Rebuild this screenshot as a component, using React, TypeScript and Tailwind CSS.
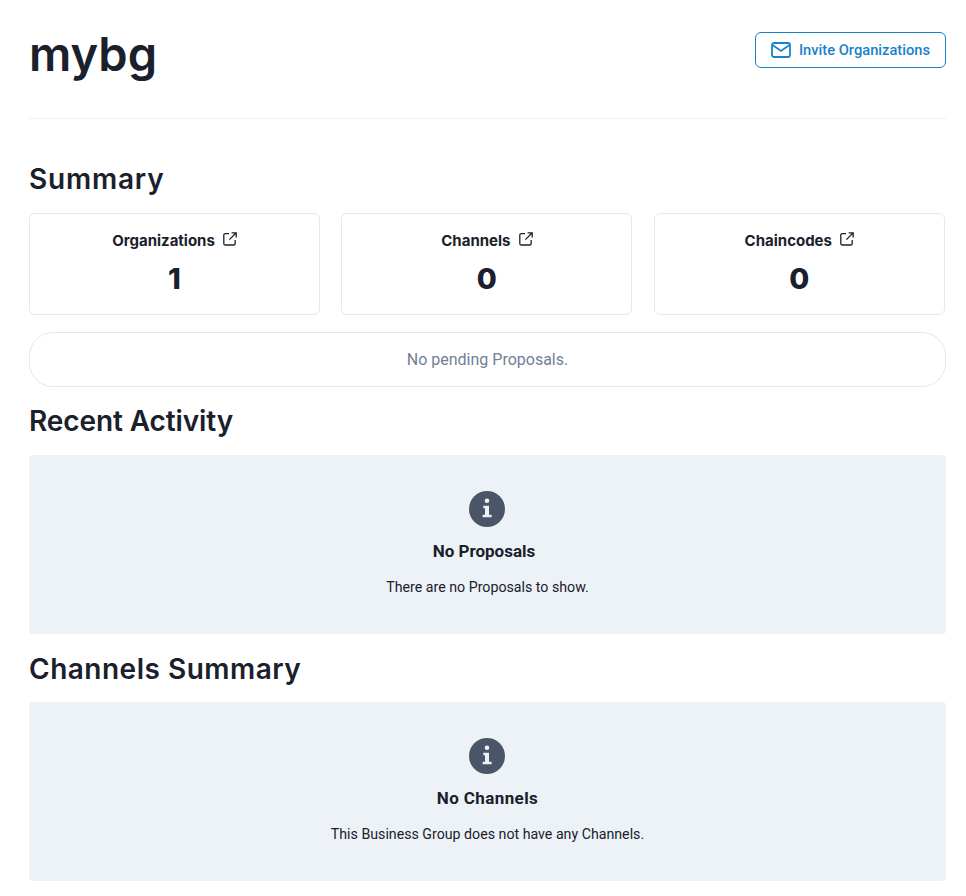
import type { ReactNode } from "react";

const heading = "font-['Inter',sans-serif]";

const summaryCards = [
  { label: "Organizations", value: 1 },
  { label: "Channels", value: 0 },
  { label: "Chaincodes", value: 0 },
];

const SectionTitle = ({ className, children }: { className: string; children: ReactNode }) => (
  <h2 className={`${heading} text-[28px] leading-9 font-semibold text-[#1a202c] ${className}`}>
    {children}
  </h2>
);

const LinkIcon = () => (
  <svg viewBox="0 0 14 14" className="mb-1 h-[14px] w-[14px] text-[#1a202c]" fill="none" stroke="currentColor" strokeWidth="1.3">
    <path d="M6 1.6H2.4A1.6 1.6 0 0 0 .8 3.2v8.2A1.6 1.6 0 0 0 2.4 13h8.2a1.6 1.6 0 0 0 1.6-1.6V8" />
    <path d="M8.6.8h4.6v4.6M13.2.8 6.4 7.6" />
  </svg>
);

const SummaryCard = ({ label, value }: { label: string; value: number }) => (
  <div className="flex h-[102px] flex-col items-center rounded-md border border-[#e2e8f0] pt-[17px]">
    <div className="flex h-5 items-center gap-2">
      <span className={`${heading} text-[15px] font-bold text-[#1a202c]`}>
        {label}
      </span>
      <LinkIcon />
    </div>
    <div className={`${heading} mt-[10px] text-[29px] leading-9 font-extrabold text-[#1a202c]`}>
      {value}
    </div>
  </div>
);

const InfoIcon = () => (
  <svg viewBox="0 0 36 36" className="mr-px h-9 w-9">
    <circle cx="18" cy="18" r="18" fill="#4a5568" />
    <circle cx="18" cy="9.7" r="2.3" fill="#edf2f7" />
    <path d="M14.3 14.7H20v9.1h2.6v2.5h-9v-2.5H16v-6.6h-1.7z" fill="#edf2f7" />
  </svg>
);

const EmptyPanel = ({ title, text, titleClass }: { title: string; text: string; titleClass?: string }) => (
  <div className="flex h-[179px] flex-col items-center rounded bg-[#edf2f7] pt-9">
    <InfoIcon />
    <div className={`mt-3 text-[17px] leading-6 font-bold text-[#1a202c] ${titleClass ?? ""}`}>{title}</div>
    <div className="mt-3 text-[14.2px] leading-6 text-[#1a202c]">{text}</div>
  </div>
);

export default function App() {
  return (
    <div className="min-h-[896px] bg-white pr-5 pl-[29px] font-['Roboto',sans-serif]">
      <div className="flex h-[119px] items-start justify-between border-b border-[#edf2f7]">
        <h1 className={`${heading} mt-[22px] text-[47px] leading-[64px] font-semibold text-[#1a202c]`}>
          mybg
        </h1>
        <button className="mt-8 flex h-9 w-[191px] items-center justify-center gap-2 rounded-md border border-[#1a82cb] text-[14.7px] font-medium text-[#1a82cb]">
          <svg viewBox="0 0 20 16" className="h-4 w-5" fill="none" stroke="currentColor" strokeWidth="1.8">
            <rect x="1" y="1" width="18" height="14" rx="2" />
            <path d="M1.5 3l8.5 6 8.5-6" />
          </svg>
          Invite Organizations
        </button>
      </div>

      <SectionTitle className="mt-[42px] tracking-[0.8px]">Summary</SectionTitle>
      <div className="mt-[16px] grid grid-cols-[repeat(3,291px)] gap-[21.4px]">
        {summaryCards.map((card) => (
          <SummaryCard key={card.label} {...card} />
        ))}
      </div>
      <div className="mt-[17px] flex h-[55px] items-center justify-center rounded-3xl border border-[#e2e8f0] text-[16px] text-[#718096]">
        No pending Proposals.
      </div>

      <SectionTitle className="mt-[16px] tracking-[-0.1px]">Recent Activity</SectionTitle>
      <div className="mt-[16px]">
        <EmptyPanel title="No Proposals" titleClass="mr-[7px]" text="There are no Proposals to show." />
      </div>

      <SectionTitle className="mt-[17px] tracking-[0.5px]">Channels Summary</SectionTitle>
      <div className="mt-[15px]">
        <EmptyPanel title="No Channels" titleClass="tracking-[0.4px]" text="This Business Group does not have any Channels." />
      </div>
    </div>
  );
}
